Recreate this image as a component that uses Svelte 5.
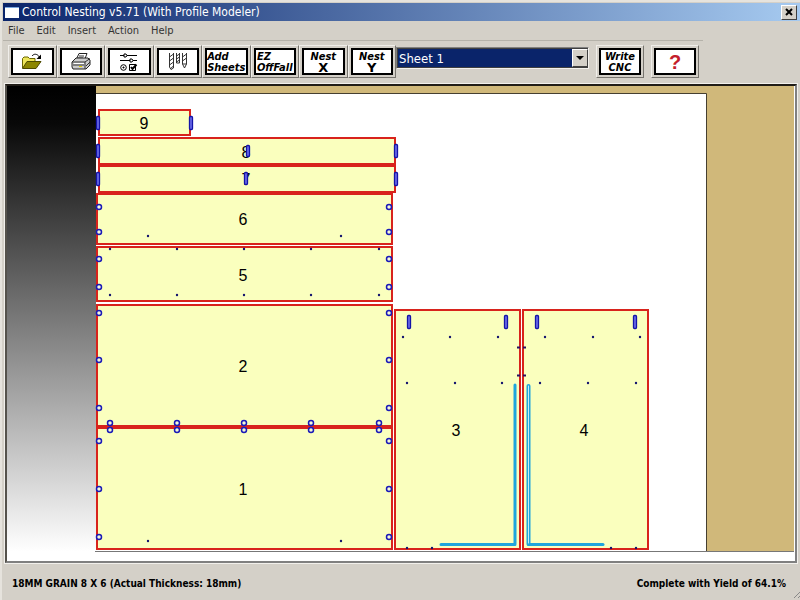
<script lang="ts">
  let sheet = $state("Sheet 1");

  const menus = ["File", "Edit", "Insert", "Action", "Help"];

  // parts placed on the sheet
  const parts = [
    { n: 9, x: 99, y: 110, w: 91, h: 25, tx: 144, ty: 129 },
    { n: 8, x: 99, y: 138, w: 296, h: 26, tx: 246, ty: 158 },
    { n: 7, x: 99, y: 166, w: 296, h: 26, tx: 246, ty: 185 },
    { n: 6, x: 97, y: 194, w: 295, h: 50, tx: 243, ty: 225 },
    { n: 5, x: 97, y: 247, w: 295, h: 54, tx: 243, ty: 281 },
    { n: 2, x: 97, y: 305, w: 295, h: 121, tx: 243, ty: 372 },
    { n: 1, x: 97, y: 428, w: 295, h: 121, tx: 243, ty: 495 },
    { n: 3, x: 395, y: 310, w: 125, h: 239, tx: 456, ty: 436 },
    { n: 4, x: 523, y: 310, w: 125, h: 239, tx: 584, ty: 436 },
  ];

  const slots = [
    { x: 96.5, y: 116.5, h: 13 },
    { x: 189.5, y: 116.5, h: 13 },
    { x: 96.5, y: 144.5, h: 13 },
    { x: 394.5, y: 144.5, h: 13 },
    { x: 96.5, y: 172.5, h: 13 },
    { x: 394.5, y: 172.5, h: 13 },
    { x: 246.5, y: 145.5, h: 11 },
    { x: 244.5, y: 172.5, h: 12 },
    { x: 407.5, y: 315.5, h: 13 },
    { x: 504.5, y: 315.5, h: 13 },
    { x: 535.5, y: 315.5, h: 13 },
    { x: 633.5, y: 315.5, h: 13 },
  ];

  const edgeRows = [207, 232, 259, 287, 313, 360, 408, 441, 489, 537];
  const boreCols = [110, 177, 244, 311, 379];
  const bores = [
    ...edgeRows.flatMap((y) => [[99, y], [389, y]]),
    ...boreCols.flatMap((x) => [[x, 423], [x, 430]]),
  ];

  const pilots = [
    ...boreCols.flatMap((x) => [[x, 249], [x, 295]]),
    [148, 236], [341, 236], [148, 541], [341, 541],
    [403, 337], [450, 337], [498, 337], [545, 337], [593, 337], [640, 337],
    [407, 383], [455, 383], [502, 383], [540, 383], [588, 383], [636, 383],
    [407, 548], [432, 548], [611, 548], [636, 548],
  ];
</script>

<svelte:head>
  <title>Control Nesting v5.71</title>
</svelte:head>

<div class="window">
  <header class="titlebar">
    <span class="app-icon"></span>
    <h1>Control Nesting v5.71 (With Profile Modeler)</h1>
    <button class="close" aria-label="Close">
      <svg width="8" height="8" viewBox="0 0 8 8"><path d="M1 1L7 7M7 1L1 7" stroke="#000" stroke-width="2" /></svg>
    </button>
  </header>

  <nav class="menu">
    {#each menus as item}
      <button>{item}</button>
    {/each}
  </nav>

  <div class="toolbar">
    <div class="tools">
      <button class="tool" aria-label="Open">
        <span class="face">
          <svg width="22" height="18" viewBox="0 0 22 18">
            <path d="M1.500 15V5.500L3 4H7L8.500 5.500H14V9" fill="#eee65a" stroke="#6b6600" />
            <path d="M1.500 15.500L6 8.500H20L15 15.500Z" fill="#8c8600" stroke="#4d4a00" />
            <path d="M11 3C13 .5 16 .5 18.500 4" fill="none" stroke="#000" />
            <path d="M20 1.500V6H15.500Z" />
          </svg>
        </span>
      </button>
      <button class="tool" aria-label="Print">
        <span class="face">
          <svg width="22" height="19" viewBox="0 0 22 19">
            <path d="M6 8L9 1.500H17L14.500 8Z" fill="#fff" stroke="#222" />
            <path d="M9 4H14M8 6H13" stroke="#333" />
            <path d="M2 10L6 6H18L20 8V13L16 17H3L2 15Z" fill="#ccc" stroke="#222" />
            <path d="M2 10H15L20 6.500M15 10V17M3 13H14M16 14L20 10" fill="none" stroke="#333" />
            <path d="M4 11H14V12H4Z" fill="#fff" />
            <path d="M9 14H12V15H9Z" fill="#ddd000" />
          </svg>
        </span>
      </button>
      <button class="tool" aria-label="Options">
        <span class="face">
          <svg width="20" height="20" viewBox="0 0 20 20" fill="none" stroke="#000">
            <path d="M1 3.500H18M1 8.500H18" />
            <path d="M5 2H7L8 3.500L7 5H5ZM11 7H13L14 8.500L13 10H11Z" fill="#fff" />
            <circle cx="4.500" cy="15.500" r="2.800" />
            <circle cx="4.500" cy="15.500" r=".6" fill="#000" />
            <path d="M10.500 12.500H16.500V18.500H10.500Z" />
            <path d="M12 15L13.500 17L17.500 12.500" stroke-width="2" />
          </svg>
        </span>
      </button>
      <button class="tool" aria-label="Tools">
        <span class="face">
          <svg width="20" height="20" viewBox="0 0 20 20" fill="none" stroke="#333">
            <path d="M1.500 1V15L3 17.500L5.500 16V1M8.500 1V11H11.500V1M14.500 1V12L16.500 16L18.500 12V1M14.500 12H18.500" />
            <path d="M1.500 5L5.500 2M1.500 9L5.500 6M1.500 13L5.500 10M2 17L5.500 14M8.500 4L11.500 2M8.500 7L11.500 5M8.500 10L11.500 8M14.500 5L18.500 2M14.500 9L18.500 6" />
          </svg>
        </span>
      </button>
      <button class="tool"><span class="face">Add<br />Sheets</span></button>
      <button class="tool"><span class="face">EZ<br />OffFall</span></button>
      <button class="tool"><span class="face axis">Nest<b>X</b></span></button>
      <button class="tool"><span class="face axis">Nest<b>Y</b></span></button>
    </div>

    <div class="sheet-box">
      <select aria-label="Sheet" bind:value={sheet}>
        <option>Sheet 1</option>
      </select>
      <span class="drop">
        <svg width="8" height="4" viewBox="0 0 8 4"><path d="M0 0H8L4 4Z" /></svg>
      </span>
    </div>

    <button class="tool single"><span class="face axis">Write<br />CNC</span></button>
    <button class="tool single"><span class="face help">?</span></button>
  </div>

  <main class="viewport">
    <svg class="drawing" viewBox="7 86 788 475">
      <defs>
        <linearGradient id="shade" x1="0" y1="0" x2="0" y2="1">
          <stop offset="0" stop-color="#000" />
          <stop offset=".08" stop-color="#080808" />
          <stop offset="1" stop-color="#fff" />
        </linearGradient>
      </defs>
      <rect x="7" y="86" width="788" height="475" fill="#fff" />
      <rect x="96" y="86" width="698" height="466" fill="#d0b87a" />
      <rect x="7" y="86" width="89" height="466" fill="url(#shade)" />
      <rect x="96" y="94" width="610" height="458" fill="#fff" />
      <path d="M96 93.500H706.500V552" fill="none" stroke="#453f30" />
      <path d="M95 551.500H794" stroke="#777" />

      <rect x="97" y="426" width="295" height="3" fill="#d9704c" />
      {#each parts as p}
        <rect x={p.x} y={p.y} width={p.w} height={p.h} class="part" />
      {/each}

      <g class="groove">
        <path d="M515 385V544M441 544.500H515" />
        <path d="M528.500 544.500H603" />
        <path d="M528.500 386V544" class="groove-wide" />
        <path d="M528.500 386V543" class="groove-core" />
      </g>

      {#each parts as p}
        <text x={p.tx} y={p.ty}>{p.n}</text>
      {/each}

      {#each slots as s}
        <rect x={s.x} y={s.y} width="3" height={s.h} rx="1" class="slot" />
      {/each}
      {#each bores as [x, y]}
        <circle cx={x} cy={y} r="2.500" class="bore" />
      {/each}
      {#each pilots as [x, y]}
        <circle cx={x} cy={y} r="1.200" class="pilot" />
      {/each}
      <path d="M517 347.500H526M517 375.500H526" stroke="#2a1060" stroke-dasharray="3 3" stroke-width="2" />
    </svg>
  </main>

  <footer class="status">
    <span>18MM GRAIN 8 X 6 (Actual Thickness: 18mm)</span>
    <span>Complete with Yield of 64.1%</span>
    <svg class="grip" width="6" height="6" viewBox="0 0 6 6"><path d="M0 6L6 0M4 6L6 4" stroke="#888" /></svg>
  </footer>
</div>

<style>
  :global(body) {
    background: #d4d0c8;
  }

  .window {
    box-sizing: border-box;
    min-height: 100vh;
    display: flex;
    flex-direction: column;
    padding: 3px 0 0 3px;
    box-shadow: inset 2px 2px 0 #e6e3dd;
    background: #d4d0c8;
    color: #000;
    font-family: "DejaVu Sans Condensed", "DejaVu Sans", sans-serif;
    font-size: 10px;
  }

  button {
    margin: 0;
    padding: 0;
    border: 0;
    background: none;
    color: inherit;
    font: inherit;
  }

  svg {
    display: block;
  }

  .titlebar {
    display: flex;
    align-items: center;
    height: 18px;
    padding: 0 3px 0 2px;
    background: linear-gradient(to right, #0a246a, #a6caf0);
  }

  .app-icon {
    width: 14px;
    height: 10px;
    background: #fff;
    border-top: 1px solid #7aa7e0;
  }

  h1 {
    flex: 1;
    margin: 0 0 0 3px;
    color: #fff;
    font-size: 12px;
    font-weight: normal;
  }

  .close {
    display: flex;
    align-items: center;
    justify-content: center;
    width: 16px;
    height: 15px;
    background: #d4d0c8;
    border: 1px solid;
    border-color: #fff #404040 #404040 #fff;
  }

  .menu {
    display: flex;
    gap: 12px;
    height: 19px;
    padding-left: 5px;
    color: #333;
    font-size: 11px;
  }

  .toolbar {
    display: flex;
    align-items: flex-start;
    width: 700px;
    max-width: 100%;
    box-sizing: border-box;
    height: 42px;
    padding: 4px 4px 0 5px;
    border-top: 1px solid #b5b2aa;
  }

  .tools {
    display: flex;
    width: 388px;
  }

  .tool {
    flex: 1;
    box-sizing: border-box;
    height: 33px;
    padding: 2px;
    border: 1px solid;
    border-color: #f0eeea #77746e #77746e #f0eeea;
  }

  .single {
    flex: none;
    width: 48px;
    margin-left: 7px;
  }

  .face {
    display: grid;
    justify-items: center;
    align-content: center;
    box-sizing: border-box;
    height: 27px;
    overflow: hidden;
    border: 2px solid #000;
    background: #fff;
    font-size: 11px;
    font-weight: bold;
    font-style: oblique;
    line-height: 11px;
    text-align: left;
  }

  .axis {
    text-align: center;
  }

  .face b {
    font-family: "DejaVu Sans", sans-serif;
    font-size: 13px;
    font-style: normal;
  }

  .help {
    color: #c41e2c;
    font-family: "Liberation Sans", sans-serif;
    font-size: 20px;
    font-style: normal;
    line-height: 22px;
  }

  .sheet-box {
    position: relative;
    flex: 1;
    box-sizing: border-box;
    height: 22px;
    margin-top: 2px;
    border: 1px solid;
    border-color: #808080 #f4f2ee #f4f2ee #808080;
  }

  select {
    appearance: none;
    display: block;
    box-sizing: border-box;
    width: 100%;
    height: 20px;
    padding: 0 18px 0 1px;
    border: 1px solid #404040;
    border-radius: 0;
    background: #0a246a;
    color: #fff;
    font-family: "DejaVu Sans Condensed", "DejaVu Sans", sans-serif;
    font-size: 13px;
  }

  .drop {
    position: absolute;
    top: 1px;
    right: 0;
    bottom: 1px;
    display: flex;
    align-items: center;
    justify-content: center;
    width: 14px;
    border: 1px solid;
    border-color: #fff #404040 #404040 #fff;
    background: #d4d0c8;
    pointer-events: none;
  }

  .viewport {
    margin: 2px 3px 0 2px;
    border: 2px solid;
    border-color: #201c16 #808080 #808080 #55524c;
    outline: 1px solid #f2f0ec;
  }

  .drawing {
    width: 100%;
    height: auto;
  }

  .drawing text {
    font-family: "Liberation Sans", sans-serif;
    font-size: 16px;
    text-anchor: middle;
  }

  .part {
    fill: #faffbe;
    stroke: #d8231c;
    stroke-width: 2;
  }

  .slot {
    fill: #6a6ae8;
    stroke: #1414a8;
    stroke-width: 1.3;
  }

  .bore {
    fill: #f4f8d8;
    stroke: #1a1ab8;
    stroke-width: 1.5;
  }

  .pilot {
    fill: #14146e;
  }

  .groove {
    fill: none;
    stroke: #1fa5dc;
    stroke-width: 3;
    stroke-linecap: round;
  }

  .groove-wide {
    stroke-width: 4;
  }

  .groove-core {
    stroke: #c9eef0;
    stroke-width: 1;
  }

  .status {
    position: relative;
    display: flex;
    justify-content: space-between;
    padding: 15px 14px 0 9px;
    font-weight: bold;
    line-height: 12px;
  }

  .grip {
    position: absolute;
    right: 0;
    bottom: -8px;
  }
</style>
